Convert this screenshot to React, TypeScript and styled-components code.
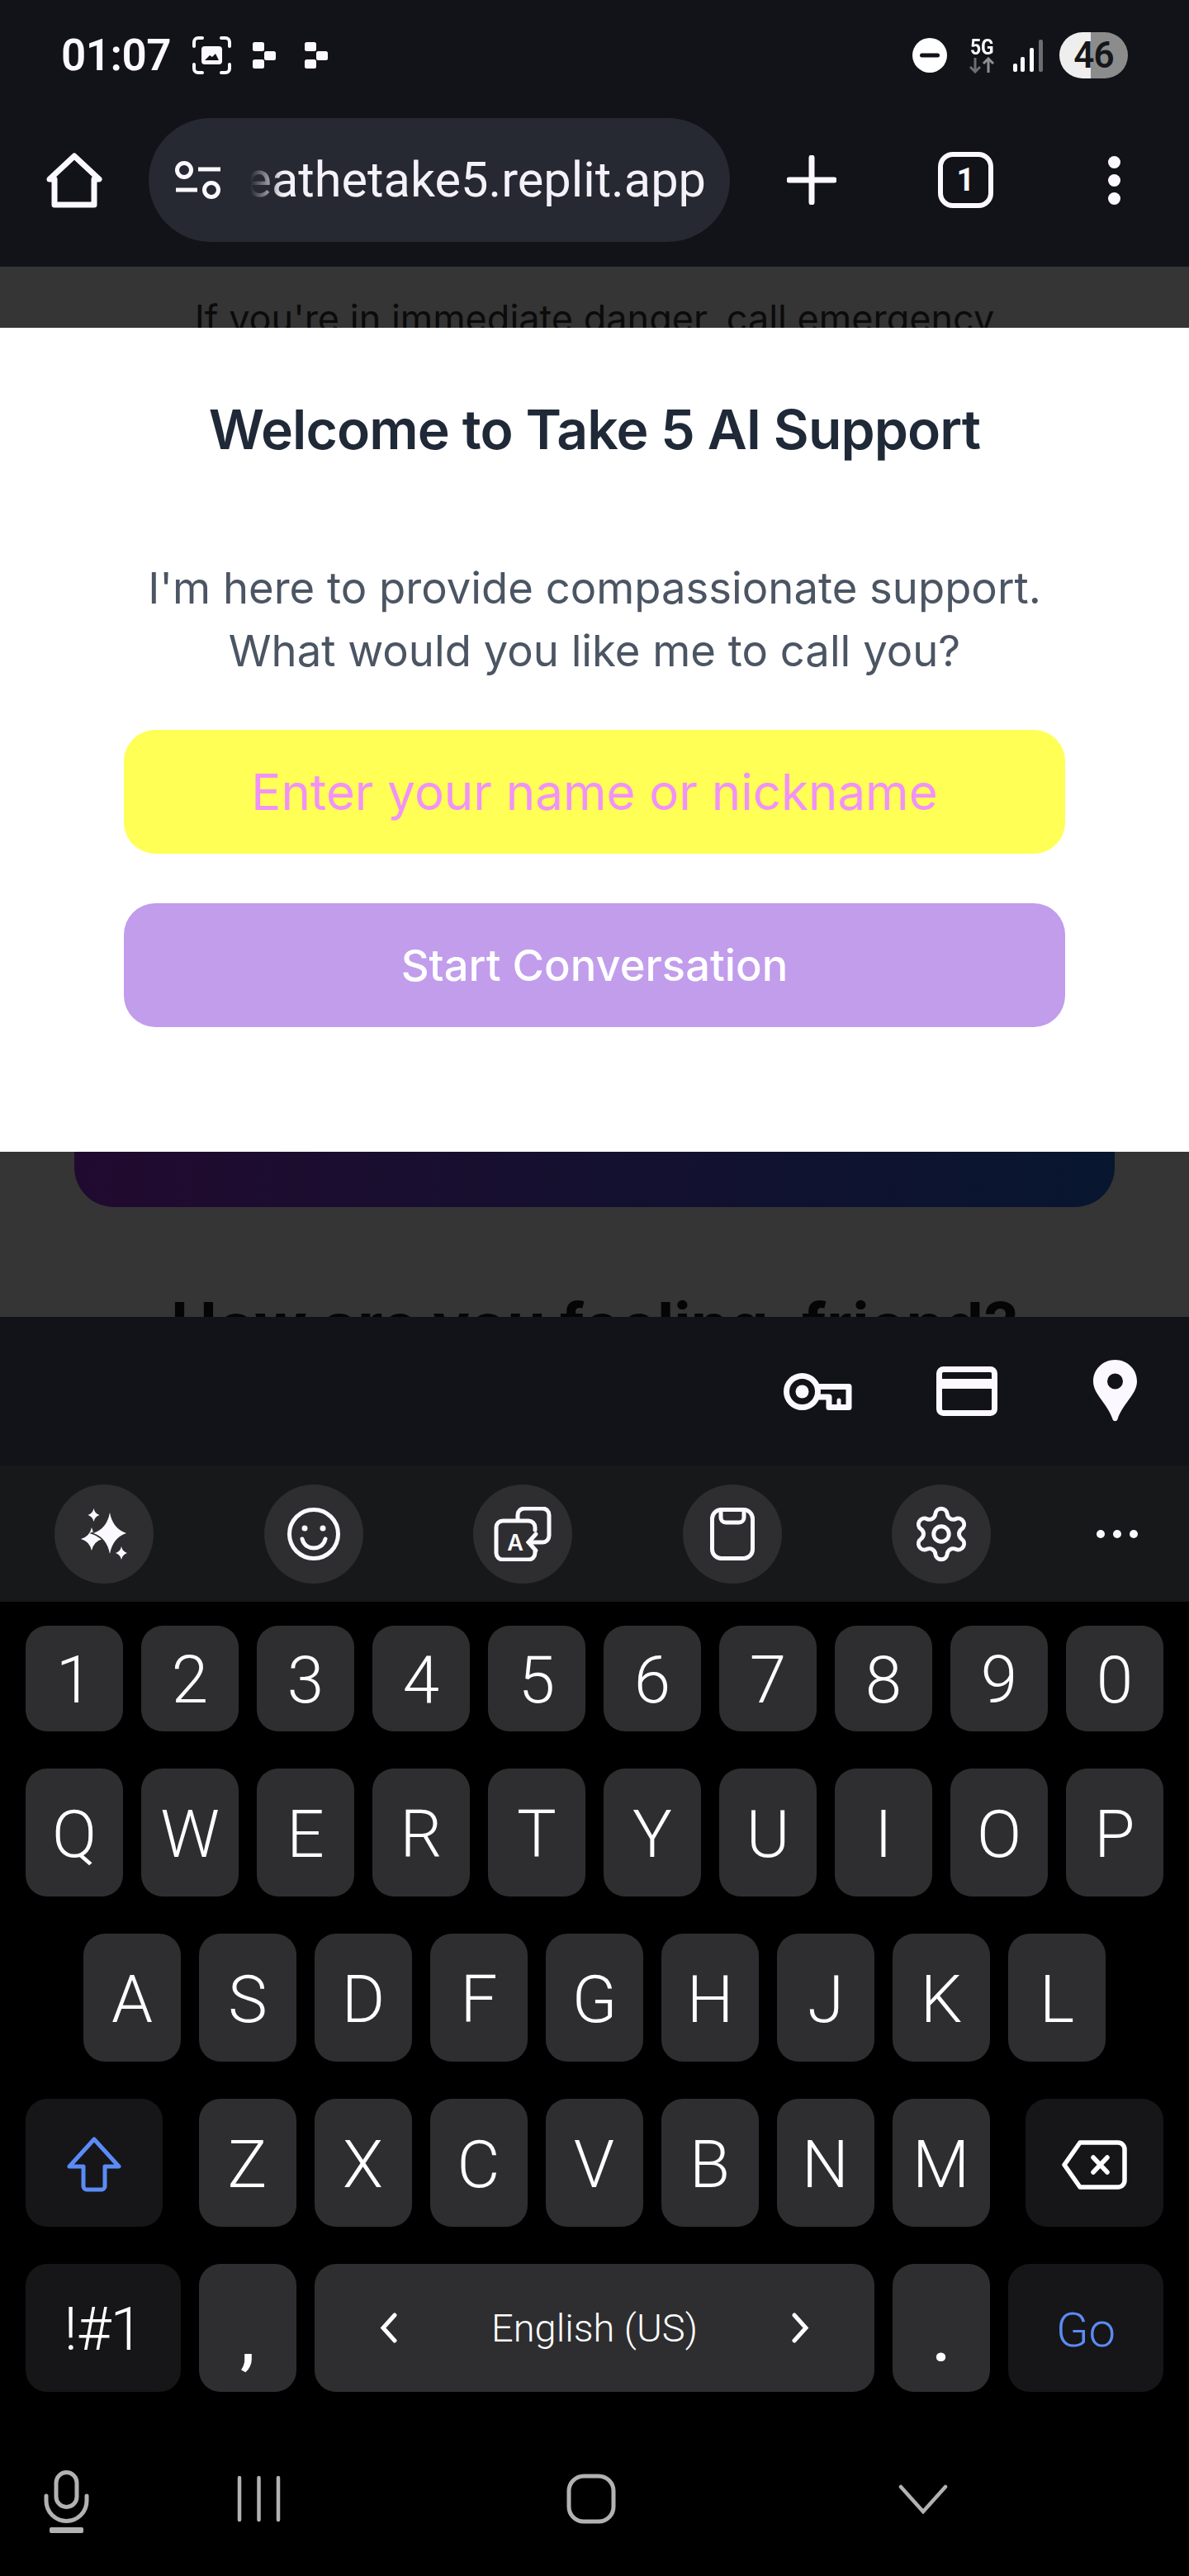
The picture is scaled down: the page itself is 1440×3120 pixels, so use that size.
import { Settings } from "lucide-react";
import styled, { createGlobalStyle } from "styled-components";

const GlobalStyle = createGlobalStyle`
  html, body {
    margin: 0;
    padding: 0;
    background: #000;
  }
  * {
    box-sizing: border-box;
  }
`;

const Screen = styled.div`
  width: 1440px;
  height: 3120px;
  overflow: hidden;
  display: flex;
  flex-direction: column;
  background: #000;
  font-family: Inter, "Noto Sans", sans-serif;
`;

const BrowserChrome = styled.header`
  height: 323px;
  flex: none;
  background: #121318;
  color: #fbf9ff;
`;

const StatusBar = styled.div`
  height: 134px;
  padding: 0 74px;
  display: flex;
  align-items: center;
  justify-content: space-between;
`;

const StatusGroup = styled.div`
  display: flex;
  align-items: center;
`;

const Clock = styled.span`
  font: 600 53px/1 Roboto, sans-serif;
  letter-spacing: -0.5px;
`;

const Spaced = styled.span<{ $left: number }>`
  display: flex;
  margin-left: ${(p) => p.$left}px;
`;

const NetworkBadge = styled.span`
  display: flex;
  flex-direction: column;
  align-items: center;
  width: 32px;
  height: 44px;
`;

const NetworkLabel = styled.span`
  font: 700 26px/24px Roboto, sans-serif;
  transform: scaleX(0.88);
  white-space: nowrap;
`;

const Battery = styled.span`
  width: 83px;
  height: 56px;
  border-radius: 28px;
  display: flex;
  align-items: center;
  justify-content: center;
  background: linear-gradient(to right, #eeeeee 46%, #8c8c8c 46%);
  color: #15161b;
  font: 600 44px/1 Roboto, sans-serif;
  letter-spacing: -1px;
`;

const Toolbar = styled.nav`
  height: 189px;
  padding: 9px 0 0 56px;
  display: flex;
  align-items: flex-start;
`;

const ToolbarSlot = styled.span<{ $left: number }>`
  height: 150px;
  display: flex;
  align-items: center;
  margin-left: ${(p) => p.$left}px;
`;

const AddressPill = styled.div`
  width: 704px;
  height: 150px;
  margin-left: 56px;
  padding: 0 29px 0 32px;
  border-radius: 75px;
  background: #262832;
  display: flex;
  align-items: center;
`;

const AddressText = styled.div`
  flex: 1;
  min-width: 0;
  margin-left: 27px;
  display: flex;
  justify-content: flex-end;
  white-space: nowrap;
  overflow: hidden;
  font: 400 59.5px/80px Roboto, sans-serif;
  color: #f4f2f8;
  mask-image: linear-gradient(to right, transparent 8px, #000 48px);
`;

const TabCount = styled.span`
  width: 67px;
  height: 68px;
  border: 6px solid #fbf9ff;
  border-radius: 18px;
  display: flex;
  align-items: center;
  justify-content: center;
  font: 700 38px/1 Roboto, sans-serif;
`;

const MenuDots = styled.span`
  display: flex;
  flex-direction: column;
  gap: 7px;
  i {
    width: 15px;
    height: 15px;
    border-radius: 50%;
    background: #fbf9ff;
  }
`;

const PageArea = styled.main`
  position: relative;
  height: 1272px;
  flex: none;
  overflow: hidden;
  background: #353535;
  color: #0b0b0b;
`;

const DangerNotice = styled.p`
  margin: 0;
  padding-top: 29px;
  text-align: center;
  font-size: 45px;
  line-height: 67px;
`;

const PromoCard = styled.div`
  height: 995px;
  margin: 48px 90px 0;
  border-radius: 48px;
  background: linear-gradient(to right, #210a2f, #08162f);
`;

const FeelingHeading = styled.h2`
  margin: 98px 0 0;
  text-align: center;
  font-size: 75px;
  font-weight: 700;
  line-height: 90px;
  color: #050505;
`;

const WelcomeModal = styled.section`
  position: absolute;
  top: 74px;
  left: 0;
  right: 0;
  height: 998px;
  padding: 83px 150px 0;
  background: #fff;
  text-align: center;
`;

const ModalTitle = styled.h1`
  margin: 0;
  font-size: 66px;
  font-weight: 600;
  line-height: 80px;
  letter-spacing: -0.9px;
  color: #1f2937;
`;

const ModalText = styled.p`
  margin: 114px -40px 58px;
  font-size: 52.6px;
  line-height: 76px;
  color: #4b5563;
`;

const NameInput = styled.input`
  display: block;
  width: 100%;
  height: 150px;
  border: 0;
  outline: 0;
  border-radius: 38px;
  background: #ffff55;
  text-align: center;
  font: 400 60px Inter, sans-serif;
  &::placeholder {
    color: #f192f8;
    opacity: 1;
  }
`;

const StartButton = styled.button`
  display: block;
  width: 100%;
  height: 150px;
  margin-top: 60px;
  border: 0;
  border-radius: 38px;
  background: #c19dec;
  color: #fff;
  font: 500 52.5px Inter, sans-serif;
`;

const AutofillBar = styled.div`
  height: 180px;
  flex: none;
  background: #121318;
  display: flex;
  align-items: center;
  justify-content: flex-end;
  padding-right: 63px;
`;

const KeyboardTools = styled.div`
  height: 165px;
  flex: none;
  padding-left: 66px;
  background: #17181a;
  display: flex;
  align-items: center;
  gap: 133.5px;
`;

const ToolCircle = styled.span`
  width: 120px;
  height: 120px;
  flex: none;
  border-radius: 50%;
  background: #2e2e30;
  display: flex;
  align-items: center;
  justify-content: center;
  color: #fbf9ff;
`;

const MoreDots = styled.span`
  display: flex;
  gap: 10px;
  margin-left: -6px;
  i {
    width: 10px;
    height: 10px;
    border-radius: 50%;
    background: #fbf9ff;
  }
`;

const Keys = styled.div`
  flex: none;
  padding: 29px 31px 0;
  display: flex;
  flex-direction: column;
  gap: 45px;
`;

const KeyRow = styled.div<{ $height: number }>`
  height: ${(p) => p.$height}px;
  display: flex;
  justify-content: center;
  gap: 22px;
`;

const SplitKeyRow = styled(KeyRow)`
  justify-content: space-between;
  gap: 0;
`;

const KeyGroup = styled.div`
  display: flex;
  gap: 22px;
`;

const Key = styled.span<{ $width?: number; $action?: boolean }>`
  width: ${(p) => p.$width ?? 118}px;
  flex: none;
  border-radius: 26px;
  background: ${(p) => (p.$action ? "#161618" : "#2e2e30")};
  color: #fff;
  display: flex;
  align-items: center;
  justify-content: center;
  padding-top: 4px;
  font: 350 80px/1 Roboto, sans-serif;
`;

const SymbolKey = styled(Key)`
  font-size: 72px;
  letter-spacing: -1px;
`;

const GoKey = styled(Key)`
  color: #5b8bf5;
  font-size: 58px;
`;

const PunctuationKey = styled(Key)`
  align-items: flex-end;
  font-size: 82px;
  font-weight: 500;
  padding-bottom: 24px;
`;

const SpaceKey = styled(Key)`
  padding: 0 78px;
  justify-content: space-between;
  font-size: 47px;
`;

const NavBar = styled.footer`
  flex: 1;
  margin-top: 0;
  padding-top: 95px;
  display: grid;
  grid-template-columns: 160px 306px 500px 304px;
  align-items: start;
  justify-items: center;
  color: #b2b2b2;
`;

const NavSlot = styled.span<{ $top: number }>`
  display: flex;
  margin-top: ${(p) => p.$top}px;
`;

const star = (cx: number, cy: number, rx: number, ry: number) =>
  `M${cx} ${cy - ry}Q${cx + rx * 0.18} ${cy - ry * 0.22} ${cx + rx} ${cy}Q${cx + rx * 0.18} ${cy + ry * 0.22} ${cx} ${cy + ry}Q${cx - rx * 0.18} ${cy + ry * 0.22} ${cx - rx} ${cy}Q${cx - rx * 0.18} ${cy - ry * 0.22} ${cx} ${cy - ry}Z`;

const ScreenshotIcon = () => (
  <svg width="47" height="46" viewBox="0 0 47 46" fill="none">
    <path
      d="M12 2H7a5 5 0 0 0-5 5v5M35 2h5a5 5 0 0 1 5 5v5M12 44H7a5 5 0 0 1-5-5v-5M35 44h5a5 5 0 0 0 5-5v-5"
      stroke="#fbf9ff"
      strokeWidth="4"
      strokeLinecap="round"
    />
    <rect x="11" y="12" width="25" height="22" rx="4" fill="#fbf9ff" />
    <path d="M15 29l6-6 3 2 4-4 4 8z" fill="#121318" />
  </svg>
);

const CheckerIcon = () => (
  <svg width="28" height="32" viewBox="0 0 28 32" fill="#fbf9ff">
    <rect width="14" height="11" rx="2.5" />
    <rect x="14" y="11" width="14" height="11" rx="2.5" />
    <rect y="21" width="14" height="11" rx="2.5" />
  </svg>
);

const DndIcon = () => (
  <svg width="42" height="42" viewBox="0 0 42 42">
    <circle cx="21" cy="21" r="21" fill="#fff" />
    <rect x="9" y="18.5" width="24" height="5" rx="2.5" fill="#121318" />
  </svg>
);

const NetworkArrows = () => (
  <svg width="32" height="20" viewBox="0 0 32 20" fill="none" strokeWidth="3">
    <path d="M8 1v17M2 12l6 6 6-6" stroke="#6d6d70" />
    <path d="M24 19V2M18 8l6-6 6 6" stroke="#8f8f92" />
  </svg>
);

const SignalIcon = () => (
  <svg width="37" height="39" viewBox="0 0 37 39">
    <rect x="0" y="29" width="5" height="10" rx="2" fill="#fff" />
    <rect x="9" y="21" width="5" height="18" rx="2" fill="#fff" />
    <rect x="20" y="10" width="5" height="29" rx="2" fill="#fff" />
    <rect x="31" y="0" width="5" height="39" rx="2" fill="#6d6d70" />
  </svg>
);

const HomeIcon = () => (
  <svg width="68" height="68" viewBox="0 0 68 68" fill="none">
    <path
      d="M34 5l30 28h-6v31H10V33H4z"
      stroke="#fbf9ff"
      strokeWidth="7"
      strokeLinejoin="round"
    />
  </svg>
);

const TuneIcon = () => (
  <svg width="56" height="46" viewBox="0 0 56 46" fill="none" stroke="#fbf9ff" strokeWidth="5">
    <circle cx="11" cy="11" r="8.5" />
    <circle cx="44" cy="35" r="8.5" />
    <path d="M28 10h27M1 35h26" />
  </svg>
);

const PlusIcon = () => (
  <svg width="60" height="60" viewBox="0 0 60 60" fill="none">
    <path d="M30 3v54M3 30h54" stroke="#fbf9ff" strokeWidth="7" strokeLinecap="round" />
  </svg>
);

const KeyIcon = () => (
  <svg width="83" height="45" viewBox="0 0 83 45" fill="none" stroke="#fbf9ff" strokeWidth="7">
    <circle cx="22.5" cy="22.5" r="19" />
    <circle cx="22.5" cy="22.5" r="8" fill="#fbf9ff" stroke="none" />
    <path d="M39 16.5h40v25H55V29H39" strokeLinejoin="round" />
    <path d="M67 42v-9" strokeLinecap="round" strokeWidth="5" />
  </svg>
);

const CardIcon = () => (
  <svg width="74" height="60" viewBox="0 0 74 60" fill="none">
    <rect x="3.5" y="3.5" width="67" height="53" rx="5" stroke="#fbf9ff" strokeWidth="7" />
    <rect y="15" width="74" height="12" fill="#fbf9ff" />
  </svg>
);

const PinIcon = () => (
  <svg width="53" height="76" viewBox="0 0 53 76">
    <path
      fillRule="evenodd"
      fill="#fbf9ff"
      d="M26.5 0C41 0 53 11 53 26c0 16-17 26-23.5 46-1 3-5 3-6 0C17 52 0 42 0 26 0 11 12 0 26.5 0ZM26.500 16.500a9.500 9.500 0 1 0 0 19 9.500 9.500 0 0 0 0-19Z"
    />
  </svg>
);

const SparkleIcon = () => (
  <svg width="120" height="120" viewBox="0 0 120 120">
    <g transform="translate(31 29)" fill="#fbf9ff">
      <path d={star(14, 37, 13, 14)} />
      <path d={star(36, 30, 20, 25)} stroke="#2e2e30" strokeWidth="3" paintOrder="stroke" />
      <path d={star(16.5, 8, 7, 8)} />
      <path d={star(50, 54, 7, 8)} />
    </g>
  </svg>
);

const SmileIcon = () => (
  <svg width="64" height="64" viewBox="0 0 64 64" fill="none" stroke="#fbf9ff" strokeWidth="5">
    <circle cx="32" cy="32" r="29.500" />
    <circle cx="21" cy="25" r="3.500" fill="#fbf9ff" stroke="none" />
    <circle cx="43" cy="25" r="3.500" fill="#fbf9ff" stroke="none" />
    <path d="M18 38c2 8 8 11 14 11s12-3 14-11" strokeLinecap="round" />
  </svg>
);

const TranslateIcon = () => (
  <svg width="74" height="66" viewBox="-3 0 74 66" fill="none" stroke="#fbf9ff" strokeWidth="5" strokeLinecap="round">
    <path d="M49 28v-3a8 8 0 0 0-8-8H10a8 8 0 0 0-8 8v31a8 8 0 0 0 8 8h31a8 8 0 0 0 8-8v-3" />
    <path d="M28 15V10a8 8 0 0 1 8-8h22a8 8 0 0 1 8 8v25a8 8 0 0 1-8 8H43" />
    <path d="M50 33l-9 10 9 10" />
    <text
      x="25"
      y="53"
      textAnchor="middle"
      fill="#fbf9ff"
      stroke="none"
      style={{ font: "600 27px Inter, sans-serif" }}
    >
      A
    </text>
  </svg>
);

const ClipboardIcon = () => (
  <svg width="54" height="64" viewBox="0 0 54 64" fill="none" stroke="#fbf9ff" strokeWidth="5">
    <rect x="2.500" y="2.500" width="49" height="59" rx="11" />
    <path d="M13 3v9a6 6 0 0 0 6 6h16a6 6 0 0 0 6-6V3" />
  </svg>
);

const ShiftIcon = () => (
  <svg width="66" height="67" viewBox="0 0 66 67" fill="none">
    <path
      d="M33 3l30 33H46v24a4 4 0 0 1-4 4H24a4 4 0 0 1-4-4V36H3z"
      stroke="#5b8bf5"
      strokeWidth="5"
      strokeLinejoin="round"
    />
  </svg>
);

const BackspaceIcon = () => (
  <svg width="79" height="60" viewBox="0 0 79 60" fill="none" stroke="#fff" strokeWidth="5.500" strokeLinejoin="round">
    <path d="M22 3h46a8 8 0 0 1 8 8v38a8 8 0 0 1-8 8H22L3 30z" />
    <path d="M38 21l17 18M55 21L38 39" strokeLinecap="round" />
  </svg>
);

const ArrowLeft = () => (
  <svg width="23" height="37" viewBox="0 0 23 37" fill="none">
    <path d="M19 3L5 18.500 19 34" stroke="#fff" strokeWidth="5" strokeLinecap="round" />
  </svg>
);

const ArrowRight = () => (
  <svg width="23" height="37" viewBox="0 0 23 37" fill="none">
    <path d="M4 3l14 15.500L4 34" stroke="#fff" strokeWidth="5" strokeLinecap="round" />
  </svg>
);

const MicIcon = () => (
  <svg width="55" height="76" viewBox="0 0 55 76" fill="none" stroke="currentColor" strokeWidth="5">
    <rect x="15" y="2.500" width="25" height="42" rx="12.500" />
    <path d="M3 31v6a24.500 24.500 0 0 0 49 0v-6" strokeLinecap="round" />
    <rect x="7" y="69" width="41" height="7" rx="2" fill="currentColor" stroke="none" />
  </svg>
);

const RecentsIcon = () => (
  <svg width="53" height="57" viewBox="0 0 53 57" fill="none" stroke="currentColor" strokeWidth="4.500" strokeLinecap="round">
    <path d="M3 3v51M26.500 3v51M50 3v51" />
  </svg>
);

const NavHomeIcon = () => (
  <svg width="60" height="61" viewBox="0 0 60 61" fill="none">
    <rect x="3" y="3" width="54" height="55" rx="18" stroke="currentColor" strokeWidth="5" />
  </svg>
);

const BackIcon = () => (
  <svg width="60" height="36" viewBox="0 0 60 36" fill="none">
    <path d="M3 3l27 30L57 3" stroke="currentColor" strokeWidth="4.500" strokeLinecap="round" />
  </svg>
);

const digitRow = ["1", "2", "3", "4", "5", "6", "7", "8", "9", "0"];
const topRow = ["Q", "W", "E", "R", "T", "Y", "U", "I", "O", "P"];
const homeRow = ["A", "S", "D", "F", "G", "H", "J", "K", "L"];
const bottomRow = ["Z", "X", "C", "V", "B", "N", "M"];

export default function App() {
  return (
    <Screen>
      <GlobalStyle />

      <BrowserChrome>
        <StatusBar>
          <StatusGroup>
            <Clock>01:07</Clock>
            <Spaced $left={26}>
              <ScreenshotIcon />
            </Spaced>
            <Spaced $left={26}>
              <CheckerIcon />
            </Spaced>
            <Spaced $left={35}>
              <CheckerIcon />
            </Spaced>
          </StatusGroup>
          <StatusGroup>
            <DndIcon />
            <Spaced $left={26}>
              <NetworkBadge>
                <NetworkLabel>5G</NetworkLabel>
                <NetworkArrows />
              </NetworkBadge>
            </Spaced>
            <Spaced $left={22}>
              <SignalIcon />
            </Spaced>
            <Spaced $left={19}>
              <Battery>46</Battery>
            </Spaced>
          </StatusGroup>
        </StatusBar>

        <Toolbar>
          <ToolbarSlot $left={0}>
            <HomeIcon />
          </ToolbarSlot>
          <AddressPill>
            <TuneIcon />
            <AddressText>breathetake5.replit.app</AddressText>
          </AddressPill>
          <ToolbarSlot $left={69}>
            <PlusIcon />
          </ToolbarSlot>
          <ToolbarSlot $left={123}>
            <TabCount>1</TabCount>
          </ToolbarSlot>
          <ToolbarSlot $left={139}>
            <MenuDots>
              <i />
              <i />
              <i />
            </MenuDots>
          </ToolbarSlot>
        </Toolbar>
      </BrowserChrome>

      <PageArea>
        <DangerNotice>If you're in immediate danger, call emergency</DangerNotice>
        <PromoCard />
        <FeelingHeading>How are you feeling, friend?</FeelingHeading>

        <WelcomeModal>
          <ModalTitle>Welcome to Take 5 AI Support</ModalTitle>
          <ModalText>
            I'm here to provide compassionate support.
            <br />
            What would you like me to call you?
          </ModalText>
          <NameInput placeholder="Enter your name or nickname" />
          <StartButton>Start Conversation</StartButton>
        </WelcomeModal>
      </PageArea>

      <AutofillBar>
        <KeyIcon />
        <Spaced $left={102}>
          <CardIcon />
        </Spaced>
        <Spaced $left={116}>
          <PinIcon />
        </Spaced>
      </AutofillBar>

      <KeyboardTools>
        <ToolCircle>
          <SparkleIcon />
        </ToolCircle>
        <ToolCircle>
          <SmileIcon />
        </ToolCircle>
        <ToolCircle>
          <TranslateIcon />
        </ToolCircle>
        <ToolCircle>
          <ClipboardIcon />
        </ToolCircle>
        <ToolCircle>
          <Settings size={74} strokeWidth={1.6} />
        </ToolCircle>
        <MoreDots>
          <i />
          <i />
          <i />
        </MoreDots>
      </KeyboardTools>

      <Keys>
        <KeyRow $height={128}>
          {digitRow.map((k) => (
            <Key key={k}>{k}</Key>
          ))}
        </KeyRow>
        <KeyRow $height={155}>
          {topRow.map((k) => (
            <Key key={k}>{k}</Key>
          ))}
        </KeyRow>
        <KeyRow $height={155}>
          {homeRow.map((k) => (
            <Key key={k}>{k}</Key>
          ))}
        </KeyRow>
        <SplitKeyRow $height={155}>
          <Key $width={166} $action>
            <ShiftIcon />
          </Key>
          <KeyGroup>
            {bottomRow.map((k) => (
              <Key key={k}>{k}</Key>
            ))}
          </KeyGroup>
          <Key $width={167} $action>
            <BackspaceIcon />
          </Key>
        </SplitKeyRow>
        <KeyRow $height={155}>
          <SymbolKey $width={188} $action>
            !#1
          </SymbolKey>
          <PunctuationKey>,</PunctuationKey>
          <SpaceKey $width={678}>
            <ArrowLeft />
            English (US)
            <ArrowRight />
          </SpaceKey>
          <PunctuationKey>.</PunctuationKey>
          <GoKey $width={188} $action>
            Go
          </GoKey>
        </KeyRow>
      </Keys>

      <NavBar>
        <NavSlot $top={0}>
          <MicIcon />
        </NavSlot>
        <NavSlot $top={6}>
          <RecentsIcon />
        </NavSlot>
        <NavSlot $top={4}>
          <NavHomeIcon />
        </NavSlot>
        <NavSlot $top={17}>
          <BackIcon />
        </NavSlot>
      </NavBar>
    </Screen>
  );
}
